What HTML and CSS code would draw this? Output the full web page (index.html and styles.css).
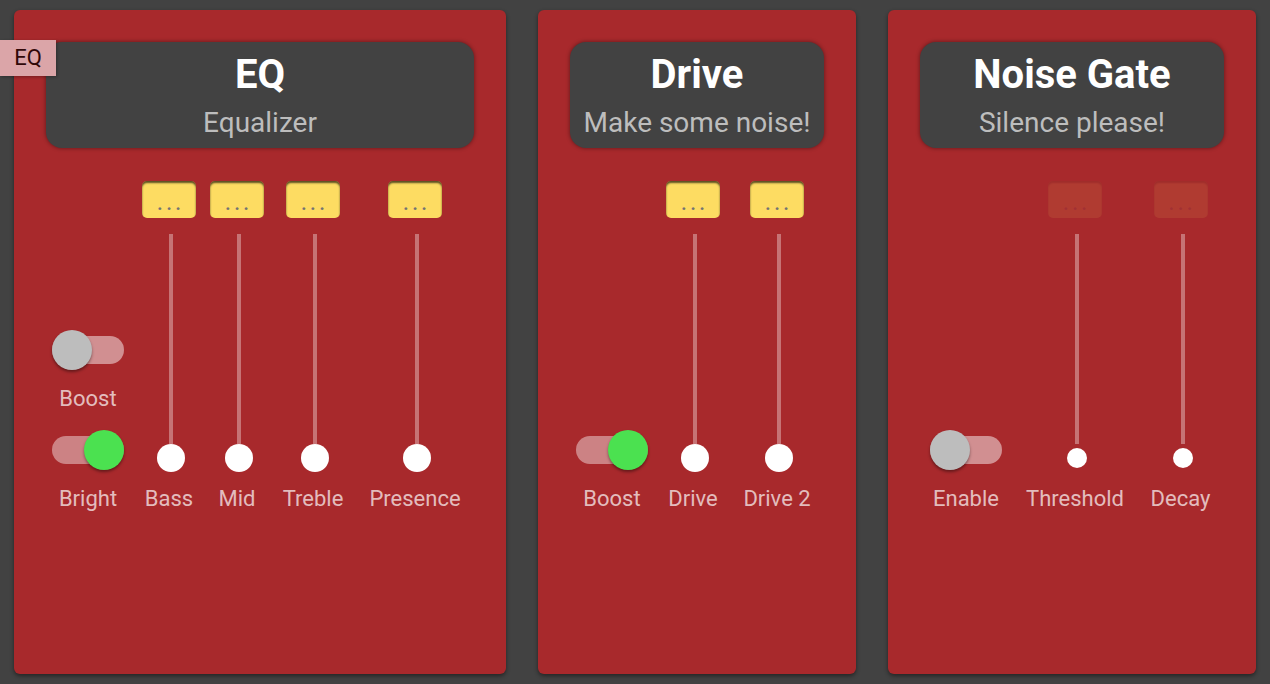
FILE: index.html
```html
<!DOCTYPE html>
<html lang="en">
<head>
<meta charset="utf-8">
<title>Effects</title>
<link rel="stylesheet" href="styles.css">
</head>
<body>
<section class="card card--eq">
  <div class="tag">EQ</div>
  <header class="head">
    <div class="title">EQ</div>
    <div class="subtitle">Equalizer</div>
  </header>
  <div class="controls controls--eq">
    <div class="ctl ctl-toggles">
      <div class="tgl-unit">
        <div class="toggle"><span class="knob"></span></div>
        <div class="label">Boost</div>
      </div>
      <div class="tgl-unit">
        <div class="toggle toggle--on"><span class="knob"></span></div>
        <div class="label">Bright</div>
      </div>
    </div>
    <div class="ctl">
      <div class="value">...</div>
      <div class="slider"><div class="track"></div><div class="thumb-slot"><div class="thumb"></div></div></div>
      <div class="label">Bass</div>
    </div>
    <div class="ctl">
      <div class="value">...</div>
      <div class="slider"><div class="track"></div><div class="thumb-slot"><div class="thumb"></div></div></div>
      <div class="label">Mid</div>
    </div>
    <div class="ctl">
      <div class="value">...</div>
      <div class="slider"><div class="track"></div><div class="thumb-slot"><div class="thumb"></div></div></div>
      <div class="label">Treble</div>
    </div>
    <div class="ctl">
      <div class="value">...</div>
      <div class="slider"><div class="track"></div><div class="thumb-slot"><div class="thumb"></div></div></div>
      <div class="label">Presence</div>
    </div>
  </div>
</section>

<section class="card card--drive">
  <header class="head">
    <div class="title">Drive</div>
    <div class="subtitle">Make some noise!</div>
  </header>
  <div class="controls controls--drive">
    <div class="ctl ctl-toggles">
      <div class="tgl-unit">
        <div class="toggle toggle--on"><span class="knob"></span></div>
        <div class="label">Boost</div>
      </div>
    </div>
    <div class="ctl">
      <div class="value">...</div>
      <div class="slider"><div class="track"></div><div class="thumb-slot"><div class="thumb"></div></div></div>
      <div class="label">Drive</div>
    </div>
    <div class="ctl">
      <div class="value">...</div>
      <div class="slider"><div class="track"></div><div class="thumb-slot"><div class="thumb"></div></div></div>
      <div class="label">Drive 2</div>
    </div>
  </div>
</section>

<section class="card card--gate">
  <header class="head">
    <div class="title">Noise Gate</div>
    <div class="subtitle">Silence please!</div>
  </header>
  <div class="controls controls--gate">
    <div class="ctl ctl-toggles">
      <div class="tgl-unit">
        <div class="toggle"><span class="knob"></span></div>
        <div class="label">Enable</div>
      </div>
    </div>
    <div class="ctl ctl--disabled">
      <div class="value">...</div>
      <div class="slider"><div class="track"></div><div class="thumb-slot"><div class="thumb thumb--small"></div></div></div>
      <div class="label">Threshold</div>
    </div>
    <div class="ctl ctl--disabled">
      <div class="value">...</div>
      <div class="slider"><div class="track"></div><div class="thumb-slot"><div class="thumb thumb--small"></div></div></div>
      <div class="label">Decay</div>
    </div>
  </div>
</section>
</body>
</html>
```

FILE: styles.css
```css
html, body {
  margin: 0;
  height: 100%;
}

body {
  box-sizing: border-box;
  padding: 10px 14px;
  background: #424242;
  font-family: Roboto, "Liberation Sans", sans-serif;
  display: flex;
  align-items: stretch;
  gap: 32px;
  overflow: hidden;
}

.card {
  position: relative;
  box-sizing: border-box;
  padding: 32px;
  background: #a8292c;
  border-radius: 6px;
  box-shadow: 0 2px 4px rgba(0, 0, 0, 0.45);
  display: flex;
  flex-direction: column;
}

.card--eq { width: 492px; }
.card--drive { width: 318px; }
.card--gate { width: 368px; }

.tag {
  position: absolute;
  left: -14px;
  top: 30px;
  width: 56px;
  height: 36px;
  box-sizing: border-box;
  background: #dba5a8;
  color: #300808;
  font-size: 22px;
  line-height: 36px;
  text-align: center;
  box-shadow: 1px 1px 3px rgba(0, 0, 0, 0.3);
  z-index: 2;
}

.head {
  background: #424242;
  border-radius: 16px;
  box-shadow: 0 0 4px rgba(0, 0, 0, 0.45);
  padding: 8px 8px 9px;
  text-align: center;
  white-space: nowrap;
}

.title {
  color: #ffffff;
  font-size: 40px;
  font-weight: 700;
  line-height: 50px;
}

.subtitle {
  margin-top: 7px;
  color: #bdbdbd;
  font-size: 28px;
  line-height: 32px;
}

.controls {
  margin-top: 33px;
  display: grid;
  align-items: end;
  justify-items: center;
}

.controls--eq { grid-template-columns: 84px 78px 58px 94px 110px; }
.controls--drive { grid-template-columns: 84px 78px 90px; }
.controls--gate { grid-template-columns: 92px 126px 85px; }

.ctl {
  display: flex;
  flex-direction: column;
  align-items: center;
}

.ctl-toggles {
  gap: 18px;
}

.tgl-unit {
  display: flex;
  flex-direction: column;
  align-items: center;
  gap: 16px;
}

.label {
  color: rgba(255, 255, 255, 0.7);
  font-size: 22px;
  line-height: 26px;
  white-space: nowrap;
}

.value {
  width: 54px;
  height: 37px;
  box-sizing: border-box;
  background: #fddc62;
  border-radius: 5px;
  box-shadow: inset 0 2px 2px rgba(0, 0, 0, 0.65);
  color: #737373;
  font-size: 18px;
  line-height: 18px;
  letter-spacing: 4px;
  text-indent: 4px;
  display: flex;
  align-items: flex-end;
  justify-content: center;
  padding-bottom: 5px;
  font-weight: 700;
}

.ctl--disabled .value {
  opacity: 0.1;
}

.slider {
  margin: 16px 0 14px 4px;
  display: flex;
  flex-direction: column;
  align-items: center;
}

.track {
  width: 4px;
  height: 210px;
  background: rgba(255, 255, 255, 0.35);
}

.thumb-slot {
  width: 28px;
  height: 28px;
  display: flex;
  align-items: center;
  justify-content: center;
}

.thumb {
  width: 28px;
  height: 28px;
  border-radius: 50%;
  background: #ffffff;
  flex-shrink: 0;
}

.thumb--small {
  width: 20px;
  height: 20px;
}

.toggle {
  width: 72px;
  height: 28px;
  margin: 6px 0;
  border-radius: 14px;
  background: rgba(255, 255, 255, 0.48);
  display: flex;
  align-items: center;
  justify-content: flex-start;
}

.toggle--on {
  justify-content: flex-end;
  background: rgba(255, 255, 255, 0.42);
}

.knob {
  width: 40px;
  height: 40px;
  flex-shrink: 0;
  border-radius: 50%;
  background: #bdbdbd;
  box-shadow: 0 2px 3px rgba(0, 0, 0, 0.4);
}

.toggle--on .knob {
  background: #4be150;
}
```
